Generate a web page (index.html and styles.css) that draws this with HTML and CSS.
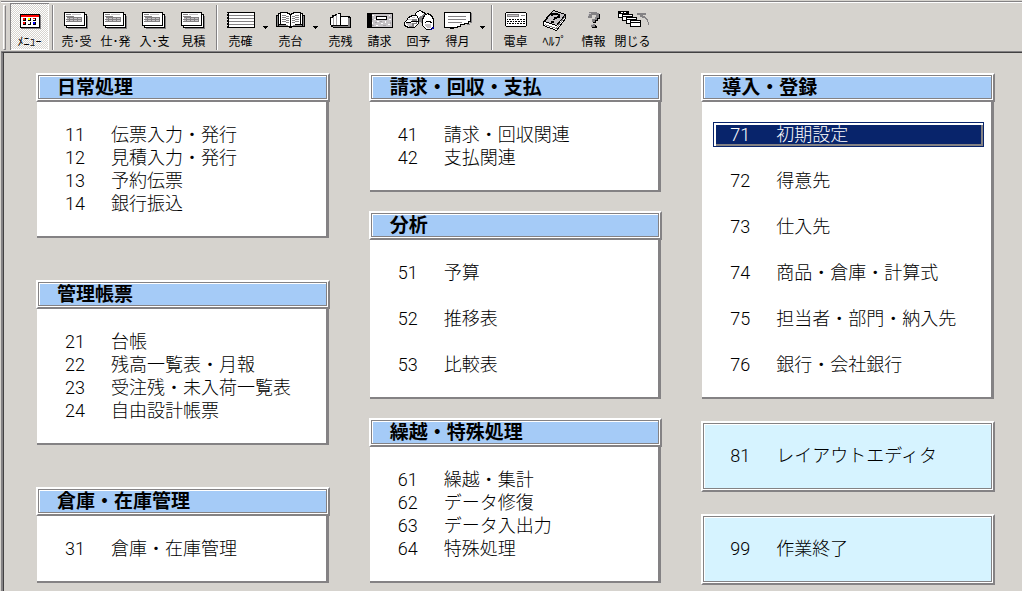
FILE: index.html
```html
<!DOCTYPE html>
<html lang="ja">
<head>
<meta charset="utf-8">
<title>メニュー</title>
<link rel="stylesheet" href="styles.css">
</head>
<body>
<svg class="defs" aria-hidden="true">
  <symbol id="slip" viewBox="0 0 33 22">
    <path fill="#848284" d="M8 6h20v13H8z"/>
    <path fill="#000" d="M6 4h21v14H6z"/>
    <path fill="#fff" d="M7 5h19v12H7z"/>
    <path fill="#000" d="M4 2h21v14H4z"/>
    <path fill="#fff" d="M5 3h19v12H5z"/>
    <path fill="#c6c3c6" d="M12 4h9v1h-9zM7 7h14v5H7z"/>
    <path fill="#848284" d="M6 4h5v1H6zM6 6h8v1H6zM7 7h15v1H7zM6 9h16v1H6zM6 11h16v1H6zM9 7h1v5H9zM13 7h1v5h-1zM17 7h1v5h-1zM21 7h1v5h-1z"/>
  </symbol>
  <symbol id="drop" viewBox="0 0 5 3"><path d="M0 0h5v1H0zM1 1h3v1H1zM2 2h1v1H2z"/></symbol>
</svg>

<header class="toolbar">
  <span class="grip"></span>
  <button class="tool pressed">
    <svg class="icon" viewBox="0 0 33 22">
      <path fill="#848284" d="M8 5h20v14H8z"/><path d="M7 4h20v14H7z"/><path fill="#f00" d="M8 5h18v2H8z"/><path fill="#fff" d="M8 7h18v10H8z"/>
      <path fill="#f00" d="M10 8h2v2h-2zM20 8h2v1h-2zM10 12h2v2h-2z"/><path fill="#ff0" d="M15 8h2v2h-2z"/><path fill="#00f" d="M20 12h2v2h-2z"/>
      <path d="M12 8h1v3h-3v-1h2zM17 8h1v3h-3v-1h2zM22 8h1v3h-3v-1h2zM12 12h1v3h-3v-1h2zM17 12h1v3h-3v-1h2zM22 12h1v3h-3v-1h2z"/>
    </svg>
    <span class="cap">ﾒﾆｭｰ</span>
  </button>
  <span class="rule"></span>
  <button class="tool"><svg class="icon"><use href="#slip"/></svg><span class="cap">売･受</span></button>
  <button class="tool"><svg class="icon"><use href="#slip"/></svg><span class="cap">仕･発</span></button>
  <button class="tool"><svg class="icon"><use href="#slip"/></svg><span class="cap">入･支</span></button>
  <button class="tool"><svg class="icon"><use href="#slip"/></svg><span class="cap">見積</span></button>
  <span class="rule"></span>
  <button class="tool">
    <svg class="icon" viewBox="0 0 33 22">
      <path d="M3 2h28v16H3z"/><path fill="#fff" d="M5 3h25v14H5z"/>
      <path fill="#848284" d="M5 5h25v1H5zM5 8h25v1H5zM5 11h25v1H5zM5 14h25v1H5z"/>
      <path fill="#d6d3ce" d="M3 3h1v1H3zM3 6h1v1H3zM3 9h1v1H3zM3 12h1v1H3zM3 15h1v1H3z"/>
    </svg>
    <span class="cap">売確</span>
  </button>
  <button class="drop" aria-label="売確の一覧"><svg class="arrow"><use href="#drop"/></svg></button>
  <button class="tool">
    <svg class="icon" viewBox="0 0 33 22">
      <path d="M2 5h2V3h2V2h8v1h2v1h1V3h2V2h8v1h2v2h2v12H18v1h-3v-1H2z"/>
      <path fill="#848284" d="M3 6h1v10H3zM29 6h1v10h-1zM5 15h9v1H5zM19 15h9v1h-9z"/>
      <path fill="#fff" d="M5 4h1v10H5zM27 4h1v10h-1z"/>
      <path fill="#fff" d="M7 3h6v1h2v1h1v11h-2v-1h-2v-1H7z"/>
      <path fill="#fff" d="M20 3h6v11h-5v1h-2v1h-2V5h1V4h2z"/>
      <path fill="#848284" d="M8 5h4v1H8zM12 6h3v1h-3zM8 7h4v1H8zM12 8h3v1h-3zM8 9h4v1H8zM12 10h3v1h-3zM8 11h4v1H8zM12 12h3v1h-3zM21 5h4v1h-4zM18 6h3v1h-3zM21 7h4v1h-4zM18 8h3v1h-3zM21 9h4v1h-4zM18 10h3v1h-3zM21 11h4v1h-4zM18 12h3v1h-3z"/>
      <path d="M16 4h1v12h-1z"/>
    </svg>
    <span class="cap">売台</span>
  </button>
  <button class="drop" aria-label="売台の一覧"><svg class="arrow"><use href="#drop"/></svg></button>
  <button class="tool">
    <svg class="icon" viewBox="0 0 33 22">
      <path d="M6 7h2V5h3V4h3V3h3v3h9v1h1v11H9v-1H7v-2H6z"/>
      <path fill="#848284" d="M24 8h2v9H9v-1h15z"/>
      <path fill="#fff" d="M17 7h7v8h-7z"/><path fill="#fff" d="M7 8h2v7H7z"/><path fill="#fff" d="M10 6h2v9h-2z"/><path fill="#fff" d="M13 4h3v11h-3z"/>
      <path fill="#a5a2a5" d="M9 7h1v8H9zM12 5h1v10h-1z"/>
    </svg>
    <span class="cap">売残</span>
  </button>
  <button class="tool">
    <svg class="icon" viewBox="0 0 33 22">
      <path d="M4 3h26v15H4z"/><path fill="#c6c3c6" d="M9 4h20v13H9z"/>
      <path fill="#fff" d="M9 5h2v1H9zM11 9h2v1h-2zM9 12h1v2H9zM14 11h2v1h-2zM18 13h2v1h-2zM22 11h1v2h-1zM26 9h2v1h-2zM25 14h2v1h-2zM13 15h2v1h-2zM26 5h1v1h-1z"/>
      <path fill="#a5a2a5" d="M9 9h1v1H9zM12 12h2v1h-2zM17 11h2v1h-2zM20 15h3v1h-3zM27 12h1v2h-1zM9 15h2v1H9zM26 7h2v1h-2z"/>
      <path d="M13 6h11v4H13z"/><path fill="#fff" d="M14 7h9v2h-9z"/>
    </svg>
    <span class="cap">請求</span>
  </button>
  <button class="tool">
    <svg class="icon" viewBox="0 0 33 22">
      <path fill="#848284" stroke="#000" d="M13.500 3.500l4-3 6 3 4 4-4 8-4-4-6-2z"/>
      <path fill="#fff" d="M14 3l4-2 5 3-5 4-4-1z"/>
      <path fill="#fff" stroke="#000" d="M22.500 5.500l3-2 4 2 2 4v7l-3 3h-4l-4-4v-6z"/>
      <path fill="#848284" d="M16 8l6-4-2 5v4l-4-2z"/>
      <path fill="#c6c3c6" d="M23 14h6v4h-4l-2-2z"/>
      <path fill="none" stroke="#000" d="M22.500 13.500l2-2h4l1 2"/>
      <path fill="#fff" stroke="#000" d="M4.500 10.500l2-3 4-2h4l2 3v5l-4 4h-6l-4-2v-3z"/>
      <path fill="#c6c3c6" d="M6 9h5v1H6zM10 7h3v1h-3zM4 13h7v3H6z"/>
      <path fill="#848284" d="M10 9h5v5h-3v3H7v-1h3v-3h4v-2h-4z"/>
      <path fill="none" stroke="#000" d="M3.500 12.500h4l3-1h5"/>
      <path fill="#0000a5" d="M28 19h2v-2h2v2h-2v1h-2z"/>
    </svg>
    <span class="cap">回予</span>
  </button>
  <button class="tool">
    <svg class="icon" viewBox="0 0 33 22">
      <path fill="#848284" d="M29 3h2v10h-2v2h-3v-1h3z"/>
      <path d="M3 2h27v10h-2v2h-4v1h-4v2h-3v1h-4v1H9v-1H3z"/>
      <path fill="#fff" d="M4 3h25v8h-2v2h-4v1h-4v2h-3v1H4z"/>
      <path fill="#848284" d="M7 6h18v1H7zM7 9h18v1H7zM7 12h14v1H7z"/>
    </svg>
    <span class="cap">得月</span>
  </button>
  <button class="drop" aria-label="得月の一覧"><svg class="arrow"><use href="#drop"/></svg></button>
  <span class="rule"></span>
  <button class="tool">
    <svg class="icon" viewBox="0 0 33 22">
      <path d="M7 2h20v1h1v13h-1v1H7v-1H6V3h1z"/><path fill="#fff" d="M7 3h20v13H7z"/>
      <path fill="#848284" d="M8 4h12v3H8zM22 5h4v1h-4z"/><path fill="#c6c3c6" d="M9 5h10v1H9z"/>
      <path d="M8 9h1v1H8zM10 9h2v1h-2zM13 9h2v1h-2zM16 9h1v1h-1zM18 9h2v1h-2zM21 9h2v1h-2zM24 9h2v1h-2zM8 11h2v1H8zM11 11h2v1h-2zM14 11h1v1h-1zM16 11h2v1h-2zM19 11h2v1h-2zM22 11h1v1h-1zM24 11h2v1h-2zM8 13h1v1H8zM10 13h2v1h-2zM13 13h2v1h-2zM16 13h1v1h-1zM18 13h2v1h-2zM21 13h2v1h-2zM24 13h2v1h-2z"/>
    </svg>
    <span class="cap">電卓</span>
  </button>
  <button class="tool">
    <svg class="icon" viewBox="0 0 33 22">
      <path fill="#fff" stroke="#000" d="M15.500 .5l12 4v4l-9 12-13-5v-4z"/>
      <path fill="#c6c3c6" stroke="#000" d="M15.500 .5l12 4-9 11-12-4z"/>
      <path fill="none" stroke="#848284" d="M7 14.500l11 4 9-12"/>
      <path fill="none" stroke="#000" stroke-width="2" d="M13 6l2-2h4l2 1v2l-4 1-1 2M13 12h3"/>
    </svg>
    <span class="cap">ﾍﾙﾌﾟ</span>
  </button>
  <button class="tool">
    <svg class="icon" viewBox="0 0 33 22">
      <path fill="#000" d="M12 3h9v1h2v5h-2v2h-2v2h-3v-3h3V8h1V5h-5v3h-3zM15 15h4v1h1v2h-5z"/>
      <path fill="#848284" d="M12 2h8v1h2v5h-2v2h-2v2h-3v-3h3V7h1V5h-4v3h-4V4h1zM14 14h4v3h-4z"/>
      <path fill="#c6c3c6" d="M12 3h2v1h-2zM11 4h1v2h-1zM14 14h2v1h-2z"/>
    </svg>
    <span class="cap">情報</span>
  </button>
  <button class="tool">
    <svg class="icon" viewBox="0 0 33 22">
      <path fill="#848284" d="M21 3h9v2h-3v1h2v1h1v1h1v1h1v3h1v3h-1v-3h-1v-2h-1V9h-1V8h-3V7h-2V5h-3z"/>
      <g fill="#fff" stroke="#000">
        <path d="M2.500 1.500h10v6h-10z"/><path d="M6.500 4.500h10v6h-10z"/>
        <path d="M10.500 7.500h10v6h-10z"/><path d="M14.500 10.500h10v6h-10z"/>
      </g>
      <path d="M3 2h2v1H3zM7 2h1v1H7zM10 2h2v1h-2zM3 3h9v1H3zM7 6h9v1H7zM11 9h9v1h-9zM15 12h9v1h-9z"/>
    </svg>
    <span class="cap">閉じる</span>
  </button>
</header>

<main class="menu">
  <div class="column wide">
    <section class="panel">
      <h2 class="title">日常処理</h2>
      <div class="list">
        <button class="item"><span class="no">11</span>伝票入力・発行</button>
        <button class="item"><span class="no">12</span>見積入力・発行</button>
        <button class="item"><span class="no">13</span>予約伝票</button>
        <button class="item"><span class="no">14</span>銀行振込</button>
      </div>
    </section>
    <section class="panel">
      <h2 class="title">管理帳票</h2>
      <div class="list">
        <button class="item"><span class="no">21</span>台帳</button>
        <button class="item"><span class="no">22</span>残高一覧表・月報</button>
        <button class="item"><span class="no">23</span>受注残・未入荷一覧表</button>
        <button class="item"><span class="no">24</span>自由設計帳票</button>
      </div>
    </section>
    <section class="panel">
      <h2 class="title">倉庫・在庫管理</h2>
      <div class="list">
        <button class="item"><span class="no">31</span>倉庫・在庫管理</button>
      </div>
    </section>
  </div>

  <div class="column">
    <section class="panel">
      <h2 class="title">請求・回収・支払</h2>
      <div class="list">
        <button class="item"><span class="no">41</span>請求・回収関連</button>
        <button class="item"><span class="no">42</span>支払関連</button>
      </div>
    </section>
    <section class="panel">
      <h2 class="title">分析</h2>
      <div class="list spaced">
        <button class="item"><span class="no">51</span>予算</button>
        <button class="item"><span class="no">52</span>推移表</button>
        <button class="item"><span class="no">53</span>比較表</button>
      </div>
    </section>
    <section class="panel">
      <h2 class="title">繰越・特殊処理</h2>
      <div class="list">
        <button class="item"><span class="no">61</span>繰越・集計</button>
        <button class="item"><span class="no">62</span>データ修復</button>
        <button class="item"><span class="no">63</span>データ入出力</button>
        <button class="item"><span class="no">64</span>特殊処理</button>
      </div>
    </section>
  </div>

  <div class="column last">
    <section class="panel">
      <h2 class="title">導入・登録</h2>
      <div class="list spaced">
        <button class="item selected"><span class="no">71</span>初期設定</button>
        <button class="item"><span class="no">72</span>得意先</button>
        <button class="item"><span class="no">73</span>仕入先</button>
        <button class="item"><span class="no">74</span>商品・倉庫・計算式</button>
        <button class="item"><span class="no">75</span>担当者・部門・納入先</button>
        <button class="item"><span class="no">76</span>銀行・会社銀行</button>
      </div>
    </section>
    <button class="command"><span class="no">81</span>レイアウトエディタ</button>
    <button class="command"><span class="no">99</span>作業終了</button>
  </div>
</main>
</body>
</html>
```
FILE: styles.css
```css
:root {
  --face: #d6d3ce;
  --shadow: #848284;
  --navy: #08246b;
}

* { box-sizing: border-box; }

body {
  margin: 0;
  min-height: 100vh;
  display: flex;
  flex-direction: column;
  background: var(--face);
  color: #000;
  font-family: Roboto, "Noto Sans CJK JP", sans-serif;
}

button {
  margin: 0;
  padding: 0;
  border: 0;
  background: none;
  color: inherit;
  font: inherit;
  text-align: left;
}

.defs {
  position: absolute;
  width: 0;
  height: 0;
}

/* Toolbar */
.toolbar {
  display: flex;
  height: 51px;
  margin: 1px 0 0 1px;
  padding: 1px 0 0 2px;
  border-top: 1px solid var(--shadow);
  box-shadow: inset 0 1px #fff;
}

.grip {
  width: 3px;
  margin: 2px 4px 2px 0;
  border: 1px solid;
  border-color: #fff var(--shadow) var(--shadow) #fff;
}

.rule {
  width: 2px;
  margin: 2px 3px;
  border-left: 1px solid var(--shadow);
  border-right: 1px solid #fff;
}

.tool {
  width: 39px;
  height: 47px;
  padding-top: 7px;
  display: flex;
  flex-direction: column;
  align-items: center;
}

.pressed {
  background: repeating-conic-gradient(#fff 0 25%, var(--face) 0 50%) 0 0 / 2px 2px;
  box-shadow: inset 1px 1px var(--shadow), inset -1px -1px #fff;
}

.icon {
  width: 33px;
  height: 22px;
  flex: none;
  shape-rendering: crispEdges;
}

.cap {
  margin-top: 3px;
  font-size: 12px;
  line-height: 14px;
  white-space: nowrap;
}

.drop {
  width: 11px;
  display: flex;
  justify-content: center;
  align-items: center;
}

.arrow {
  width: 5px;
  height: 3px;
  shape-rendering: crispEdges;
}

/* Menu area */
.menu {
  flex: 1;
  display: grid;
  grid-template-columns: repeat(3, 1fr);
  gap: 39px;
  margin-left: 1px;
  padding: 20px 27px 6px 33px;
  border-top: 1px solid #424142;
  border-left: 2px solid var(--shadow);
  box-shadow: 0 -1px var(--shadow), inset 1px 0 #424142;
}

.column {
  display: flex;
  flex-direction: column;
  gap: 19px;
}

.column.wide { gap: 42px; }
.column.last { gap: 22px; }

.title,
.command {
  border: 2px solid;
  border-color: #fff var(--shadow) var(--shadow) #fff;
  box-shadow: inset -1px -1px #fff, inset 1px 1px var(--shadow),
    inset -2px -2px var(--shadow), inset 2px 2px #fff;
}

.title {
  margin: 0;
  padding-left: 19px;
  background-color: #a5cbf7;
  font-size: 19px;
  font-weight: 700;
  line-height: 25px;
}

.list {
  display: flex;
  flex-direction: column;
  margin: 0 1px;
  padding: 21px 8px 21px 12px;
  background: #fff;
  border-right: 3px solid var(--shadow);
  border-bottom: 2px solid var(--shadow);
}

.list.spaced { gap: 23px; }

.item {
  display: flex;
  padding-left: 16px;
  font-size: 18px;
  font-weight: 300;
  line-height: 23px;
}

.no {
  width: 46px;
  flex: none;
}

.selected {
  background: var(--navy);
  color: #fff;
  outline: 1px solid var(--navy);
  box-shadow: inset 2px 2px #fff, inset -2px -2px var(--shadow);
}

.command {
  display: flex;
  padding: 21px 0 23px 27px;
  background-color: #d6f3ff;
  font-size: 18px;
  font-weight: 300;
  line-height: 23px;
}
```
